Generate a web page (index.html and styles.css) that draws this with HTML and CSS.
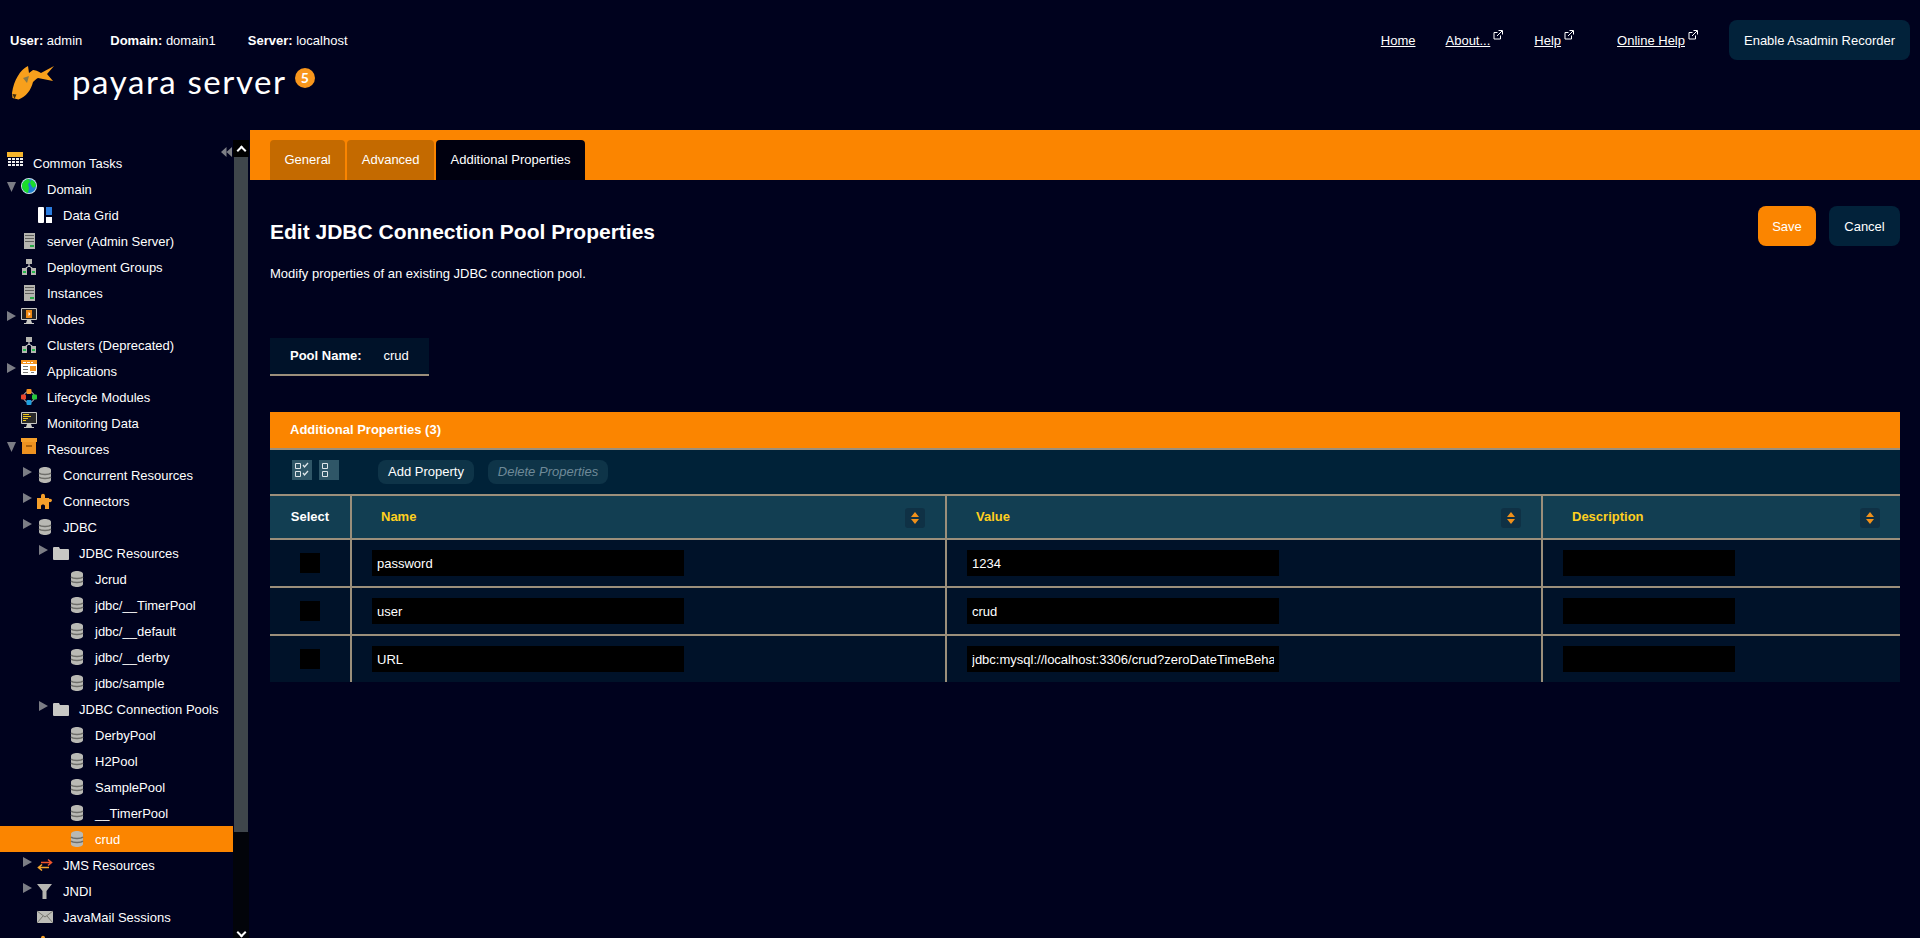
FILE: index.html
```html
<!DOCTYPE html>
<html>
<head>
    <meta charset="utf-8">
    <title>Edit JDBC Connection Pool Properties</title>
    <link rel="stylesheet" href="styles.css">
</head>
<body>
    <svg class="defs" width="0" height="0">
        <symbol id="i-tasks" viewBox="0 0 16 16"><rect x="0" y="0" width="16" height="5" fill="#f6b52c"/><path d="M1 6h3v2H1zM5 6h3v2H5zM9 6h3v2H9zM13 6h3v2h-3zM1 9h3v2H1zM5 9h3v2H5zM9 9h3v2H9zM13 9h3v2h-3zM1 12h3v2H1zM5 12h3v2H5zM9 12h3v2H9zM13 12h3v2h-3z" fill="#eee"/></symbol>
        <symbol id="i-globe" viewBox="0 0 16 16"><circle cx="8" cy="8" r="8" fill="#cfe6ee"/><circle cx="8" cy="8" r="7" fill="#1f7fd0"/><path d="M1 8C1 4 4 1.500 8 1l1 3-2 2 1 4-1 5C3 14 1 11 1 8zM10 2c3 .5 5 3 5 6l-3 2-2-3-1-2z" fill="#1bdc2a"/></symbol>
        <symbol id="i-grid" viewBox="0 0 16 16"><rect x="1" y="0" width="6" height="16" rx="1" fill="#fff"/><rect x="9" y="0" width="6" height="8" fill="#2b7de0"/><rect x="9" y="10" width="6" height="6" fill="#fff"/></symbol>
        <symbol id="i-server" viewBox="0 0 16 16"><rect x="3" y="0" width="11" height="16" fill="#b5b5b0"/><path d="M4 2h9v1H4zM4 5h9v1H4zM4 8h9v1H4z" fill="#5f5f5c"/><rect x="9" y="12" width="4" height="2" fill="#27a845"/></symbol>
        <symbol id="i-cluster" viewBox="0 0 16 16"><rect x="5" y="0" width="6" height="5" fill="#b5b5b0"/><path d="M8 5v3M8 7L3.500 10M8 7l4.500 3" stroke="#ddd" fill="none"/><rect x="1" y="9" width="5" height="7" fill="#b5b5b0"/><rect x="10" y="9" width="5" height="7" fill="#b5b5b0"/><path d="M2 12h3v2H2zM11 12h3v2h-3z" fill="#22b84a"/></symbol>
        <symbol id="i-node" viewBox="0 0 16 16"><rect x="0" y="0" width="16" height="12" rx="1" fill="#c9c9c4"/><rect x="1" y="1" width="14" height="10" fill="#222"/><rect x="5" y="2" width="6" height="8" fill="#f08a14"/><path d="M7.500 4l2 2-2 2z" fill="#fff"/><path d="M6 12h4l1 3h2v1H3v-1h2z" fill="#c9c9c4"/></symbol>
        <symbol id="i-apps" viewBox="0 0 16 16"><rect x="0" y="0" width="16" height="15" rx="1" fill="#fff"/><rect x="0" y="0" width="16" height="4" fill="#f59420"/><path d="M2 2h3v1H2zM6 2h3v1H6zM10 2h2v1h-2z" fill="#fff"/><rect x="9" y="6" width="6" height="5" fill="#f59420"/><path d="M2 6h5v1H2zM2 9h5v1H2zM2 12h5v1H2zM10 12h3v1h-3z" fill="#777"/></symbol>
        <symbol id="i-life" viewBox="0 0 16 16"><circle cx="8" cy="8" r="5.500" fill="none" stroke="#ccc"/><rect x="5.500" y="0" width="5" height="5" rx="1" fill="#f59420"/><rect x="0" y="5.500" width="5" height="5" rx="1" fill="#e8452c"/><rect x="11" y="5.500" width="5" height="5" rx="1" fill="#25c93c"/><rect x="5.500" y="11" width="5" height="5" rx="1" fill="#1d9fe0"/></symbol>
        <symbol id="i-monitor" viewBox="0 0 16 16"><rect x="0" y="0" width="16" height="12" rx="1" fill="#c9c9c4"/><rect x="1" y="1" width="14" height="10" fill="#2a2a2a"/><path d="M2 2h6v1H2zM2 4h8v1H2zM2 6h5v1H2zM2 8h3v1H2z" fill="#f2c81e"/><path d="M6 12h4l1 3h2v1H3v-1h2z" fill="#c9c9c4"/></symbol>
        <symbol id="i-box" viewBox="0 0 16 16"><rect x="0" y="0" width="16" height="4" fill="#f59f2a"/><rect x="1" y="4" width="14" height="12" fill="#ee9220"/><rect x="5" y="7" width="6" height="2" fill="#a9600d"/></symbol>
        <symbol id="i-db" viewBox="0 0 16 16"><path d="M2 3c0-4 12-4 12 0v10c0 4-12 4-12 0z" fill="#b9b9b4"/><path d="M2 6c2 2 10 2 12 0M2 10c2 2 10 2 12 0" stroke="#6e6e6a" stroke-width="1.500" fill="none"/></symbol>
        <symbol id="i-puzzle" viewBox="0 0 16 16"><path d="M0 5h4V3c0-3 4-3 4 0v2h4v1c4-1 4 4 0 3v7H8v-3c0-2-4-2-4 0v3H0z" fill="#f59f2a"/></symbol>
        <symbol id="i-folder" viewBox="0 0 16 16"><path d="M0 3c0-1 1-1 1-1h5l1 2h8c1 0 1 1 1 1v9c0 1-1 1-1 1H1c-1 0-1-1-1-1z" fill="#c8c8c4"/></symbol>
        <symbol id="i-jms" viewBox="0 0 16 16"><path d="M4 5.500h10M11 2.500l3.500 3-3.500 3" fill="none" stroke="#f0552a" stroke-width="1.600"/><path d="M12 10.500H2M5 7.500l-3.500 3 3.500 3" fill="none" stroke="#f5a62a" stroke-width="1.600"/></symbol>
        <symbol id="i-filter" viewBox="0 0 16 16"><path d="M0 1h15L9.500 8v8h-4V8z" fill="#b5b5b0"/></symbol>
        <symbol id="i-mail" viewBox="0 0 16 16"><rect x="0" y="2" width="16" height="12" fill="#bdbdb8"/><path d="M0 2l8 6 8-6M0 14l6-7M16 14l-6-7" stroke="#77776f" fill="none"/></symbol>
        <symbol id="i-ext" viewBox="0 0 10 10"><path d="M4.500 2.500H1v6.500h6.500V5.500" fill="none" stroke="#fff"/><path d="M4 6l5-5M5.500 .5h4V4.500" fill="none" stroke="#fff"/></symbol>
        <symbol id="i-sort" viewBox="0 0 12 12"><path d="M6 0l4 5H2zM6 12L2 7h8z" fill="#f0901a"/></symbol>
    </svg>

    <header class="masthead">
        <div class="topbar">
            <div class="userinfo">
                <span class="u-user"><b>User:</b> admin</span>
                <span class="u-domain"><b>Domain:</b> domain1</span>
                <span><b>Server:</b> localhost</span>
            </div>
            <nav class="toplinks">
                <a class="toplink" href="#">Home</a>
                <span class="extlink about"><a class="toplink" href="#">About...</a><svg class="ext"><use href="#i-ext"/></svg></span>
                <span class="extlink help"><a class="toplink" href="#">Help</a><svg class="ext"><use href="#i-ext"/></svg></span>
                <span class="extlink online"><a class="toplink" href="#">Online Help</a><svg class="ext"><use href="#i-ext"/></svg></span>
                <button class="btn recorder">Enable Asadmin Recorder</button>
            </nav>
        </div>
        <div class="brand">
            <svg class="fish" viewBox="0 0 44 35">
                <path d="M17 1C9 5 3 15 1 28l.5 5 6 1.500C15 32 20 25 22 17c2-2 3-3 5-4l15 3-6-7 7-8-13 7c-3-2-6-3-8-3l-4 3z" fill="#f8a01c"/>
                <path d="M12 13l6-2-2 7z" fill="#8a7a4a"/>
                <path d="M1.500 29l4 .5-2 4.500z" fill="#3a2a10"/>
            </svg>
            <span class="brandname">payara server</span>
            <span class="badge">5</span>
        </div>
    </header>

    <div class="main">
        <aside class="sidebar">
            <span class="collapse"></span>
            <div class="tree">
                <div class="node top"><svg class="ico"><use href="#i-tasks"/></svg>Common Tasks</div>
                <div class="node l0"><span class="arrow down"></span><svg class="ico lift"><use href="#i-globe"/></svg>Domain</div>
                <div class="node l1"><span class="arrow none"></span><svg class="ico"><use href="#i-grid"/></svg>Data Grid</div>
                <div class="node l0"><span class="arrow none"></span><svg class="ico"><use href="#i-server"/></svg>server (Admin Server)</div>
                <div class="node l0"><span class="arrow none"></span><svg class="ico"><use href="#i-cluster"/></svg>Deployment Groups</div>
                <div class="node l0"><span class="arrow none"></span><svg class="ico"><use href="#i-server"/></svg>Instances</div>
                <div class="node l0"><span class="arrow right"></span><svg class="ico lift"><use href="#i-node"/></svg>Nodes</div>
                <div class="node l0"><span class="arrow none"></span><svg class="ico"><use href="#i-cluster"/></svg>Clusters (Deprecated)</div>
                <div class="node l0"><span class="arrow right"></span><svg class="ico lift"><use href="#i-apps"/></svg>Applications</div>
                <div class="node l0"><span class="arrow none"></span><svg class="ico"><use href="#i-life"/></svg>Lifecycle Modules</div>
                <div class="node l0"><span class="arrow none"></span><svg class="ico lift"><use href="#i-monitor"/></svg>Monitoring Data</div>
                <div class="node l0"><span class="arrow down"></span><svg class="ico lift"><use href="#i-box"/></svg>Resources</div>
                <div class="node l1"><span class="arrow right"></span><svg class="ico"><use href="#i-db"/></svg>Concurrent Resources</div>
                <div class="node l1"><span class="arrow right"></span><svg class="ico"><use href="#i-puzzle"/></svg>Connectors</div>
                <div class="node l1"><span class="arrow right"></span><svg class="ico"><use href="#i-db"/></svg>JDBC</div>
                <div class="node l2"><span class="arrow right"></span><svg class="ico"><use href="#i-folder"/></svg>JDBC Resources</div>
                <div class="node l3"><span class="arrow none"></span><svg class="ico"><use href="#i-db"/></svg>Jcrud</div>
                <div class="node l3"><span class="arrow none"></span><svg class="ico"><use href="#i-db"/></svg>jdbc/__TimerPool</div>
                <div class="node l3"><span class="arrow none"></span><svg class="ico"><use href="#i-db"/></svg>jdbc/__default</div>
                <div class="node l3"><span class="arrow none"></span><svg class="ico"><use href="#i-db"/></svg>jdbc/__derby</div>
                <div class="node l3"><span class="arrow none"></span><svg class="ico"><use href="#i-db"/></svg>jdbc/sample</div>
                <div class="node l2"><span class="arrow right"></span><svg class="ico"><use href="#i-folder"/></svg>JDBC Connection Pools</div>
                <div class="node l3"><span class="arrow none"></span><svg class="ico"><use href="#i-db"/></svg>DerbyPool</div>
                <div class="node l3"><span class="arrow none"></span><svg class="ico"><use href="#i-db"/></svg>H2Pool</div>
                <div class="node l3"><span class="arrow none"></span><svg class="ico"><use href="#i-db"/></svg>SamplePool</div>
                <div class="node l3"><span class="arrow none"></span><svg class="ico"><use href="#i-db"/></svg>__TimerPool</div>
                <div class="node l3 selected"><span class="arrow none"></span><svg class="ico"><use href="#i-db"/></svg>crud</div>
                <div class="node l1"><span class="arrow right"></span><svg class="ico"><use href="#i-jms"/></svg>JMS Resources</div>
                <div class="node l1"><span class="arrow right"></span><svg class="ico"><use href="#i-filter"/></svg>JNDI</div>
                <div class="node l1"><span class="arrow none"></span><svg class="ico"><use href="#i-mail"/></svg>JavaMail Sessions</div>
                <div class="node l1"><span class="arrow none"></span><svg class="ico"><use href="#i-puzzle"/></svg></div>
            </div>
            <div class="scrollbar">
                <div class="scroll-btn"><span class="chev up"></span></div>
                <div class="scroll-thumb"></div>
                <div class="scroll-rest"><span class="chev dn"></span></div>
            </div>
        </aside>

        <main class="content">
            <div class="tabs">
                <a class="tab" href="#">General</a>
                <a class="tab" href="#">Advanced</a>
                <a class="tab active" href="#">Additional Properties</a>
            </div>
            <div class="page">
                <div class="titlerow">
                    <h1>Edit JDBC Connection Pool Properties</h1>
                    <div class="actions">
                        <button class="btn save">Save</button>
                        <button class="btn cancel">Cancel</button>
                    </div>
                </div>
                <p class="help-text">Modify properties of an existing JDBC connection pool.</p>
                <div class="poolname"><b>Pool Name:</b><span>crud</span></div>

                <section class="panel">
                    <div class="panel-title">Additional Properties (3)</div>
                    <div class="toolbar">
                        <span class="selbtn"><svg viewBox="0 0 20 20"><path d="M3.500 3.500h5v5h-5zM3.500 11.500h5v5h-5z" fill="none" stroke="#dfe6ea"/><path d="M11 5l1.500 2L16 3M11 13l1.500 2L16 11" fill="none" stroke="#dfe6ea" stroke-width="1.300"/></svg></span>
                        <span class="selbtn"><svg viewBox="0 0 20 20"><path d="M3.500 3.500h5v5h-5zM3.500 11.500h5v5h-5z" fill="none" stroke="#dfe6ea"/></svg></span>
                        <button class="tool add">Add Property</button>
                        <button class="tool off">Delete Properties</button>
                    </div>
                    <table class="props">
                        <colgroup><col class="c-sel"><col class="c-name"><col class="c-val"><col class="c-desc"></colgroup>
                        <thead>
                            <tr>
                                <th class="sel">Select</th>
                                <th><div class="thead"><span>Name</span><span class="sort"><svg><use href="#i-sort"/></svg></span></div></th>
                                <th><div class="thead"><span>Value</span><span class="sort"><svg><use href="#i-sort"/></svg></span></div></th>
                                <th><div class="thead"><span>Description</span><span class="sort"><svg><use href="#i-sort"/></svg></span></div></th>
                            </tr>
                        </thead>
                        <tbody>
                            <tr>
                                <td class="sel"><input class="check" type="checkbox"></td>
                                <td><input class="field" type="text" value="password"></td>
                                <td><input class="field" type="text" value="1234"></td>
                                <td><input class="field short" type="text" value=""></td>
                            </tr>
                            <tr>
                                <td class="sel"><input class="check" type="checkbox"></td>
                                <td><input class="field" type="text" value="user"></td>
                                <td><input class="field" type="text" value="crud"></td>
                                <td><input class="field short" type="text" value=""></td>
                            </tr>
                            <tr>
                                <td class="sel"><input class="check" type="checkbox"></td>
                                <td><input class="field" type="text" value="URL"></td>
                                <td><input class="field" type="text" value="jdbc:mysql://localhost:3306/crud?zeroDateTimeBehavior=convertToNull"></td>
                                <td><input class="field short" type="text" value=""></td>
                            </tr>
                        </tbody>
                    </table>
                </section>
            </div>
        </main>
    </div>
</body>
</html>
```

FILE: styles.css
```css
*{
    box-sizing:border-box;
    padding:0;
    margin:0;
}
html,body{
    height:100%;
    overflow:hidden;
}
body{
    background-color:#00021e;
    color:#fff;
    font-family:"Liberation Sans",Arial,sans-serif;
    font-size:13px;
    display:flex;
    flex-direction:column;
}
.defs{
    display:block;
    height:0;
}
a{
    color:#fff;
}
button{
    font-family:inherit;
    font-size:13px;
    color:#fff;
    border:none;
}

/* header */
.masthead{
    height:130px;
    flex:none;
}
.topbar{
    display:flex;
    align-items:center;
    justify-content:space-between;
    padding:20px 10px 0 10px;
}
.userinfo{
    display:flex;
}
.u-user{
    margin-right:28px;
}
.u-domain{
    margin-right:32px;
}
.toplinks{
    display:flex;
    align-items:center;
}
.extlink{
    display:flex;
    align-items:center;
}
.about{
    margin-left:30px;
}
.help{
    margin-left:31px;
}
.online{
    margin-left:43px;
}
.ext{
    width:10px;
    height:10px;
    margin:-10px 0 0 3px;
}
.btn{
    height:40px;
    border-radius:8px;
    background-color:#02223a;
}
.recorder{
    width:181px;
    margin-left:31px;
}
.brand{
    display:flex;
    align-items:center;
    padding:5px 0 0 11px;
}
.fish{
    width:44px;
    height:35px;
}
.brandname{
    font-family:Lato,sans-serif;
    font-size:33px;
    letter-spacing:1.6px;
    line-height:34px;
    margin-left:17px;
    position:relative;
    top:-2px;
}
.badge{
    width:20px;
    height:20px;
    border-radius:50%;
    margin:-10px 0 0 8px;
    background-color:#f8961c;
    font-family:Lato,sans-serif;
    font-weight:700;
    font-size:14px;
    line-height:20px;
    text-align:center;
}

/* sidebar */
.main{
    flex:1;
    display:flex;
    min-height:0;
}
.sidebar{
    width:250px;
    flex:none;
    display:flex;
    position:relative;
}
.collapse{
    position:absolute;
    left:221px;
    top:17px;
    width:11px;
    height:10px;
    background-color:#7d7f86;
    clip-path:polygon(0 50%,50% 0,50% 50%,100% 0,100% 100%,50% 50%,50% 100%);
}
.tree{
    width:233px;
    padding-top:20px;
    overflow:hidden;
}
.node{
    display:flex;
    align-items:center;
    height:26px;
    white-space:nowrap;
}
.top{
    padding-left:7px;
}
.l0{
    padding-left:5px;
}
.l1{
    padding-left:21px;
}
.l2{
    padding-left:37px;
}
.l3{
    padding-left:53px;
}
.selected{
    background-color:#fb8500;
}
.arrow{
    width:16px;
    height:16px;
    flex:none;
    position:relative;
    top:-3px;
}
.arrow.right{
    background-color:#7b7d85;
    clip-path:polygon(2px 3px,11px 8px,2px 13px);
}
.arrow.down{
    background-color:#7b7d85;
    clip-path:polygon(2px 4px,11px 4px,6.5px 14px);
}
.ico{
    width:16px;
    height:16px;
    flex:none;
    margin-right:10px;
}
.top .ico{
    position:relative;
    top:-3px;
}
.lift{
    position:relative;
    top:-3px;
}
.scrollbar{
    width:16px;
    padding-top:10px;
    display:flex;
    flex-direction:column;
}
.scroll-btn{
    height:17px;
    background-color:#000;
    display:flex;
    align-items:center;
    justify-content:center;
}
.scroll-thumb{
    height:675px;
    margin-right:1px;
    margin-left:1px;
    background-color:#3f464b;
}
.scroll-rest{
    flex:1;
    background-color:#02040a;
    display:flex;
    align-items:flex-end;
    justify-content:center;
    padding-bottom:2px;
}
.chev{
    width:7px;
    height:7px;
    border-left:2px solid #fff;
    border-top:2px solid #fff;
}
.chev.up{
    transform:rotate(45deg);
    margin-top:4px;
}
.chev.dn{
    transform:rotate(225deg);
}

/* content */
.content{
    flex:1;
    min-width:0;
}
.tabs{
    height:50px;
    background-color:#fb8500;
    padding:10px 0 0 20px;
    display:flex;
    gap:2px;
}
.tab{
    height:40px;
    line-height:40px;
    padding:0 14.5px;
    border-radius:4px 4px 0 0;
    background-color:#c46a00;
    text-decoration:none;
}
.tab.active{
    background-color:#00000f;
}
.page{
    padding:26px 20px 0 20px;
}
.titlerow{
    display:flex;
    justify-content:space-between;
    height:40px;
}
h1{
    font-size:21px;
    line-height:24px;
    margin-top:14px;
}
.actions{
    display:flex;
    gap:13px;
}
.save{
    width:58px;
    background-color:#fb8500;
}
.cancel{
    width:71px;
}
.help-text{
    line-height:16px;
    margin-top:20px;
}
.poolname{
    width:159px;
    height:38px;
    margin-top:56px;
    padding:0 0 2px 20px;
    display:flex;
    align-items:center;
    gap:22px;
    background-color:#001229;
    border-bottom:2px solid #9b8f7b;
}
.panel{
    margin-top:36px;
    background-color:#001229;
}
.panel-title{
    height:38px;
    line-height:36px;
    padding-left:20px;
    font-weight:bold;
    background-color:#fb8500;
    border-bottom:2px solid #9b8f7b;
}
.toolbar{
    height:44px;
    padding:10px 0 0 22px;
    display:flex;
    align-items:flex-start;
    background-color:#002238;
}
.selbtn{
    width:20px;
    height:20px;
    margin-right:7px;
    background-color:#2f5667;
    display:block;
}
.selbtn svg{
    display:block;
    width:20px;
    height:20px;
}
.tool{
    height:24px;
    padding-bottom:2px;
    border-radius:8px;
    background-color:#0e3448;
}
.add{
    width:96px;
    margin-left:32px;
}
.off{
    width:120px;
    margin-left:14px;
    font-style:italic;
    color:#6f8a98;
}

/* table */
.props{
    width:100%;
    table-layout:fixed;
    border-collapse:separate;
    border-spacing:0;
}
.c-sel{
    width:80px;
}
.c-name{
    width:595px;
}
.c-val{
    width:596px;
}
.c-desc{
    width:359px;
}
.props th,.props td{
    border-top:2px solid #9b8f7b;
    border-left:2px solid #9b8f7b;
}
.props th.sel,.props td.sel{
    border-left:none;
    text-align:center;
}
.props th{
    height:44px;
    padding-bottom:2px;
    background-color:#123e52;
    color:#ffcf1f;
    text-align:left;
}
.props th.sel{
    color:#fff;
}
.props td{
    height:48px;
    padding-left:20px;
}
.props td.sel{
    padding-left:0;
}
.thead{
    display:flex;
    align-items:center;
    justify-content:space-between;
    padding:0 20px 0 29px;
}
.sort{
    width:20px;
    height:20px;
    margin-top:4px;
    border-radius:3px;
    background-color:#0f3145;
    display:flex;
    align-items:center;
    justify-content:center;
}
.sort svg{
    width:12px;
    height:12px;
}
.check{
    appearance:none;
    display:block;
    width:20px;
    height:20px;
    margin:0 auto;
    background-color:#000;
}
.field{
    display:block;
    width:312px;
    height:26px;
    padding:0 5px;
    border:none;
    background-color:#000;
    color:#fff;
    font-family:inherit;
    font-size:13px;
}
.short{
    width:172px;
}
```
